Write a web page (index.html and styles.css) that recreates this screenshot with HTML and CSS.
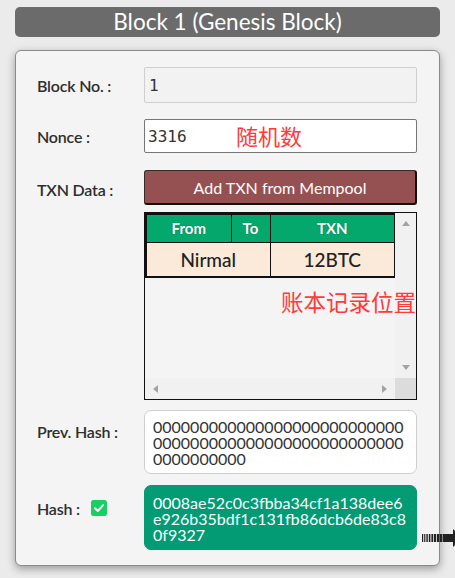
FILE: index.html
```html
<!DOCTYPE html>
<html>
<head>
<meta charset="utf-8">
<link rel="stylesheet" href="styles.css">
</head>
<body>
<div class="page">
  <div class="title">Block 1 (Genesis Block)</div>
  <div class="card">
    <div class="row r-block">
      <div class="label">Block No. :</div>
      <div class="field input readonly">1</div>
    </div>

    <div class="row r-nonce">
      <div class="label">Nonce :</div>
      <div class="field input nonce">3316<span class="note note-nonce">随机数</span></div>
    </div>

    <div class="row r-txn">
      <div class="label l-txn">TXN Data :</div>
      <div class="field txn-col">
        <div class="btn">Add TXN from Mempool</div>
        <div class="scrollbox">
          <div class="scroll-content">
            <table class="txn">
              <tr><th class="c-from">From</th><th class="c-to">To</th><th>TXN</th></tr>
              <tr><td colspan="2">Nirmal</td><td>12BTC</td></tr>
            </table>
          </div>
          <div class="vbar"><span class="tri up"></span><span class="tri down"></span></div>
          <div class="hbar"><span class="tri left"></span><span class="tri right"></span></div>
          <div class="corner"></div>
          <span class="note note-ledger">账本记录位置</span>
        </div>
      </div>
    </div>

    <div class="row r-prev">
      <div class="label l-prev">Prev. Hash :</div>
      <div class="field hashbox prev">000000000000000000000000000 000000000000000000000000000 0000000000</div>
    </div>

    <div class="row r-hash">
      <div class="label l-hash">Hash : <span class="check"><svg width="16" height="16" viewBox="0 0 16 16"><rect width="16" height="16" rx="2.5" fill="#17cf63"/><path d="M4 8.2 L6.8 11 L12 5.3" fill="none" stroke="#fff" stroke-width="2" stroke-linecap="round" stroke-linejoin="round"/></svg></span></div>
      <div class="field hashbox cur">0008ae52c0c3fbba34cf1a138dee6 e926b35bdf1c131fb86dcb6de83c8 0f9327
        <svg class="arrow" width="40" height="20" viewBox="0 0 40 20"><g fill="#222"><rect x="0" y="6" width="1.2" height="8"/><rect x="2.2" y="6" width="1.2" height="8"/><rect x="4.4" y="6" width="1.4" height="8"/><rect x="6.8" y="6" width="1.6" height="8"/><rect x="9.4" y="6" width="1.8" height="8"/><rect x="12" y="6" width="2" height="8"/><rect x="14.8" y="6" width="2.2" height="8"/><rect x="17.6" y="6" width="2.4" height="8"/><rect x="20.6" y="6" width="11" height="8"/><path d="M31 1 L40 10 L31 19 Z"/></g></svg>
      </div>
    </div>
  </div>
</div>
</body>
</html>
```
FILE: styles.css
```css
* { box-sizing: border-box; }
html, body { margin: 0; padding: 0; }
body {
  background: #ebebeb;
  font-family: Lato, "Noto Sans", sans-serif;
  color: #333;
  width: 455px;
  height: 578px;
  overflow: hidden;
}
.page {
  padding: 7px 15px 0 15px;
  display: flex;
  flex-direction: column;
}
.title {
  height: 30px;
  background: #6b6b6b;
  color: #fff;
  border-radius: 5px;
  font-size: 22.5px;
  line-height: 30px;
  text-align: center;
}
.card {
  margin-top: 13px;
  height: 516px;
  background: #f4f4f4;
  border: 1px solid #8a8a8a;
  border-radius: 6px;
  box-shadow: 0 3px 9px rgba(0,0,0,0.35);
  padding: 16px 22px 0 21px;
  display: flex;
  flex-direction: column;
}
.row { display: flex; }
.r-block { height: 36px; }
.r-nonce { height: 34px; margin-top: 16px; }
.r-txn { height: 230px; margin-top: 17px; }
.r-prev { height: 64px; margin-top: 10px; }
.r-hash { height: 65px; margin-top: 11px; }
.label {
  width: 107px;
  flex-shrink: 0;
  font-size: 16px;
  font-weight: 600;
  color: #2e2e2e;
  display: flex;
  align-items: center;
  letter-spacing: -0.2px;
}
.l-txn { align-items: flex-start; padding-top: 10px; }
.l-prev { align-items: flex-start; padding-top: 12px; }
.l-hash { align-items: flex-start; padding-top: 14px; gap: 11px; }
.check { display: inline-flex; margin-top: 1px; }
.field { position: relative; width: 273px; }
.input {
  font-family: "DejaVu Sans Mono", "Liberation Mono", monospace;
  font-size: 16px;
  display: flex;
  align-items: center;
  padding-left: 4px;
  color: #333;
}
.readonly {
  background: #f2f2f2;
  border: 1px solid #cfcfcf;
  border-radius: 2px;
}
.nonce {
  background: #fff;
  border: 1px solid #767676;
  border-radius: 2px;
  padding-left: 3px;
}
.note {
  position: absolute;
  color: #ff3a3a;
  font-family: "Noto Sans CJK SC", sans-serif;
  font-size: 22px;
  line-height: 1;
  white-space: nowrap;
}
.note-nonce { left: 91px; top: 4px; }
.note-ledger { left: 136px; top: 77px; font-size: 22.5px; }
.txn-col {
  display: flex;
  flex-direction: column;
  gap: 7px;
}
.btn {
  height: 35px;
  background: #955151;
  border: 1px solid #3a2a2a;
  border-right: 2px solid #111;
  border-bottom: 2px solid #111;
  border-radius: 3px;
  color: #fff;
  font-size: 16px;
  display: flex;
  align-items: center;
  justify-content: center;
  flex-shrink: 0;
}
.scrollbox {
  position: relative;
  height: 188px;
  border: 1px solid #111;
  display: grid;
  grid-template-columns: 1fr 21px;
  grid-template-rows: 1fr 21px;
  background: #f4f4f4;
}
.scroll-content { overflow: hidden; }
.txn {
  border-collapse: collapse;
  width: 251px;
  border: 2px solid #111;
}
.txn th {
  background: #04a86d;
  color: #fff;
  font-weight: 700;
  font-size: 15px;
  height: 28px;
  border: 1px solid #111;
  padding: 0;
  text-shadow: 0 0 1px rgba(0,60,40,0.6);
}
.txn .c-from { width: 85px; }
.txn .c-to { width: 39px; }
.txn td {
  background: #fbeada;
  color: #222;
  font-size: 19px;
  font-weight: 500;
  height: 35px;
  border: 1px solid #111;
  text-align: center;
  padding: 0;
}
.vbar {
  background: #f1f1f1;
  display: flex;
  flex-direction: column;
  justify-content: space-between;
  align-items: center;
  padding: 8px 0;
}
.hbar {
  background: #f1f1f1;
  display: flex;
  justify-content: space-between;
  align-items: center;
  padding: 0 8px;
}
.corner { background: #dcdcdc; }
.tri { width: 0; height: 0; border: 4px solid transparent; }
.up { border-bottom: 5px solid #a3a3a3; border-top: 0; }
.down { border-top: 5px solid #a3a3a3; border-bottom: 0; }
.left { border-right: 5px solid #a3a3a3; border-left: 0; }
.right { border-left: 5px solid #a3a3a3; border-right: 0; }
.hashbox {
  border-radius: 7px;
  font-size: 16px;
  line-height: 16px;
  padding: 8px 8px 0 8px;
  word-break: break-all;
}
.prev {
  background: #fff;
  border: 1px solid #cfcfcf;
  color: #333;
}
.cur {
  background: #029b74;
  border: 1px solid #029b74;
  color: #fff;
  padding-top: 9px;
}
.arrow {
  position: absolute;
  left: 277px;
  top: 42px;
}
```
